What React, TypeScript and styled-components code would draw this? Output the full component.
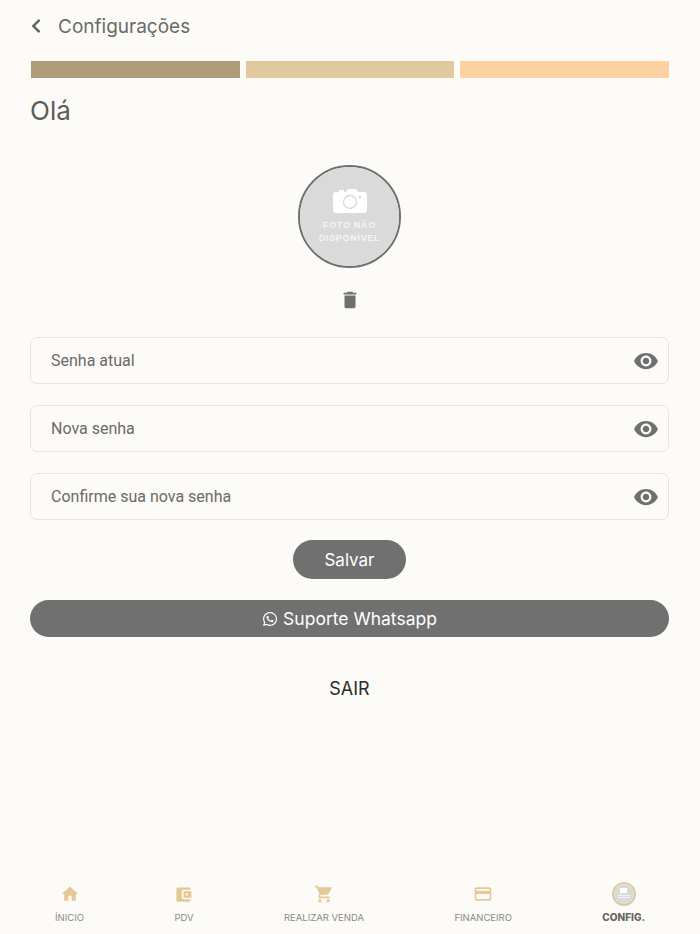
import React from "react";
import styled, { createGlobalStyle } from "styled-components";
import {
  MdHome,
  MdAccountBalanceWallet,
  MdShoppingCart,
  MdCreditCard,
  MdDelete,
  MdVisibility,
} from "react-icons/md";
import { FaChevronLeft, FaWhatsapp } from "react-icons/fa";

const DISPLAY_FONT = `"Inter", "Liberation Sans", sans-serif`;

const GlobalStyle = createGlobalStyle`
  html, body {
    margin: 0;
    padding: 0;
    background: #fcfbf7;
  }
  * {
    box-sizing: border-box;
  }
`;

const FotoPlaceholder = (): JSX.Element => (
  <Foto>
    <svg width="34" height="24" viewBox="0 0 34 24">
      <path
        fill="#fff"
        d="M3 3h3V1h5v2h2l2-3h8l2 3h6a3 3 0 0 1 3 3v15a3 3 0 0 1-3 3H3a3 3 0 0 1-3-3V6a3 3 0 0 1 3-3z"
      />
      <circle cx="17" cy="13" r="6.5" fill="none" stroke="#dadada" strokeWidth="1.4" />
      <circle cx="27" cy="8" r="1.2" fill="#dadada" />
    </svg>
    <FotoText>
      FOTO NÃO
      <br />
      DISPONÍVEL
    </FotoText>
  </Foto>
);

const fields = ["Senha atual", "Nova senha", "Confirme sua nova senha"];

const navItems = [
  { label: "ÍNICIO", icon: <MdHome size={20} /> },
  { label: "PDV", icon: <MdAccountBalanceWallet size={19} /> },
  { label: "REALIZAR VENDA", icon: <MdShoppingCart size={20} /> },
  { label: "FINANCEIRO", icon: <MdCreditCard size={20} /> },
];

const App = (): JSX.Element => (
  <Page>
    <GlobalStyle />
    <Header>
      <BackIcon>
        <FaChevronLeft size={16} />
      </BackIcon>
      <Title>Configurações</Title>
    </Header>
    <Steps>
      <Step $color="#b09b79" />
      <Step $color="#e0c99e" />
      <Step $color="#fdd2a0" />
    </Steps>
    <Greeting>Olá</Greeting>
    <AvatarBlock>
      <Avatar>
        <FotoPlaceholder />
      </Avatar>
      <TrashButton>
        <MdDelete size={22} />
      </TrashButton>
    </AvatarBlock>
    <Form>
      {fields.map((field) => (
        <Field key={field}>
          <FieldLabel>{field}</FieldLabel>
          <MdVisibility size={26} color="#6f6f6f" />
        </Field>
      ))}
    </Form>
    <SaveButton>Salvar</SaveButton>
    <SupportButton>
      <FaWhatsapp size={16} />
      Suporte Whatsapp
    </SupportButton>
    <Logout>SAIR</Logout>
    <BottomNav>
      {navItems.map((item) => (
        <NavItem key={item.label}>
          <NavIcon>{item.icon}</NavIcon>
          <NavLabel>{item.label}</NavLabel>
        </NavItem>
      ))}
      <NavItem>
        <NavAvatar>
          <NavAvatarInner>
            <NavCamera />
            <NavLine />
            <NavLine />
          </NavAvatarInner>
        </NavAvatar>
        <NavLabel $active>CONFIG.</NavLabel>
      </NavItem>
    </BottomNav>
  </Page>
);

export default App;

const Page = styled.div`
  width: 700px;
  height: 934px;
  padding: 0 31px 0 30px;
  display: flex;
  flex-direction: column;
  background: #fcfbf7;
  font-family: ${DISPLAY_FONT};
  overflow: hidden;
`;

const Header = styled.header`
  height: 52px;
  display: flex;
  align-items: center;
  gap: 14px;
  color: #646464;
`;

const BackIcon = styled.span`
  display: flex;
  margin-left: -2px;
`;

const Title = styled.h1`
  margin: 0;
  font-size: 19px;
  font-weight: 400;
  color: #6a6a6a;
`;

const Steps = styled.div`
  margin: 9px 0 0 1px;
  display: grid;
  grid-template-columns: repeat(3, 1fr);
  gap: 6px;
`;

const Step = styled.div<{ $color: string }>`
  height: 17px;
  background: ${(p) => p.$color};
`;

const Greeting = styled.h2`
  margin: 17px 0 0;
  height: 32px;
  line-height: 32px;
  font-size: 26px;
  font-weight: 400;
  color: #5c5c5c;
`;

const AvatarBlock = styled.div`
  margin-top: 38px;
  display: flex;
  flex-direction: column;
  align-items: center;
`;

const Avatar = styled.div`
  width: 103px;
  height: 103px;
  border-radius: 50%;
  border: 2px solid #6f6f6f;
  overflow: hidden;
`;

const Foto = styled.div`
  width: 100%;
  height: 100%;
  padding-top: 22px;
  display: flex;
  flex-direction: column;
  align-items: center;
  background: #dadada;
`;

const FotoText = styled.div`
  margin-top: 6px;
  font-family: "Liberation Sans", sans-serif;
  font-size: 9px;
  font-weight: 700;
  line-height: 13px;
  letter-spacing: 0.7px;
  text-align: center;
  color: #f4f4f4;
`;

const TrashButton = styled.div`
  margin-top: 21px;
  height: 22px;
  display: flex;
  color: #6f6f6f;
`;

const Form = styled.div`
  margin-top: 26px;
  display: flex;
  flex-direction: column;
  gap: 21px;
`;

const Field = styled.div`
  height: 47px;
  padding: 0 9px 0 20px;
  display: flex;
  align-items: center;
  justify-content: space-between;
  border: 1.5px solid #e6e4df;
  border-radius: 7px;
`;

const FieldLabel = styled.span`
  font-family: "Roboto", sans-serif;
  font-size: 16px;
  color: #6a6a6a;
`;

const SaveButton = styled.button`
  margin: 20px auto 0;
  width: 113px;
  height: 39px;
  border: none;
  border-radius: 20px;
  background: #707070;
  color: #fff;
  font-family: ${DISPLAY_FONT};
  font-size: 17px;
`;

const SupportButton = styled.button`
  margin-top: 21px;
  height: 37px;
  display: flex;
  align-items: center;
  justify-content: center;
  gap: 5px;
  border: none;
  border-radius: 19px;
  background: #707070;
  color: #fff;
  font-family: ${DISPLAY_FONT};
  font-size: 17.5px;
`;

const Logout = styled.div`
  margin-top: 42px;
  font-size: 18px;
  line-height: 20px;
  text-align: center;
  color: #2b2b2b;
`;

const BottomNav = styled.nav`
  margin: auto 24px 0 25px;
  height: 59px;
  padding-bottom: 10px;
  display: flex;
  justify-content: space-between;
  align-items: flex-end;
`;

const NavItem = styled.div`
  display: flex;
  flex-direction: column;
  align-items: center;
`;

const NavIcon = styled.div`
  height: 24px;
  display: flex;
  align-items: center;
  color: #e4c997;
`;

const NavLabel = styled.span<{ $active?: boolean }>`
  margin-top: 5px;
  font-size: ${(p) => (p.$active ? "10px" : "9.5px")};
  line-height: 13px;
  font-weight: ${(p) => (p.$active ? 800 : 400)};
  color: ${(p) => (p.$active ? "#666" : "#8a8a8a")};
  white-space: nowrap;
`;

const NavAvatar = styled.div`
  width: 24px;
  height: 24px;
  border-radius: 50%;
  border: 2px solid #e0c99e;
  overflow: hidden;
`;

const NavAvatarInner = styled.div`
  width: 100%;
  height: 100%;
  padding-top: 4px;
  display: flex;
  flex-direction: column;
  align-items: center;
  gap: 1px;
  background: #d9d9d9;
`;

const NavCamera = styled.div`
  width: 7px;
  height: 5px;
  margin-bottom: 1px;
  background: #fff;
`;

const NavLine = styled.div`
  width: 12px;
  height: 1px;
  background: #f3f3f3;
`;
